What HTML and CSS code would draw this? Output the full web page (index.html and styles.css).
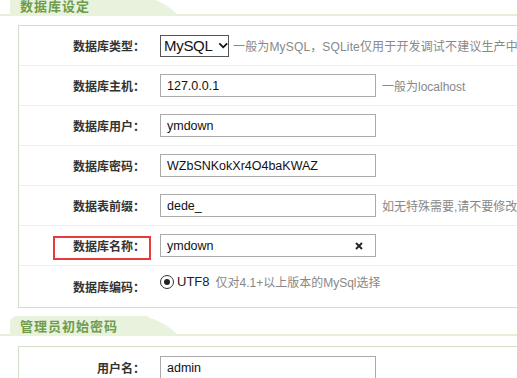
FILE: index.html
```html
<!DOCTYPE html>
<html>
<head>
	<meta charset="UTF-8">
	<title>数据库设定</title>
	<link rel="stylesheet" href="styles.css">
</head>
<body>

<div class="page">
	<div class="sec-head"><span class="tab">数据库设定</span></div>
	<div class="box">
		<div class="row">
			<span class="lab">数据库类型：</span>
			<div class="field">
				<span class="select">MySQL<svg width="12" height="9" viewBox="0 0 12 9"><path d="M1.5 2 L6 6.5 L10.5 2" fill="none" stroke="#111" stroke-width="2"/></svg></span>
				<span class="tip tip-near">一般为MySQL，SQLite仅用于开发调试不建议生产中</span>
			</div>
		</div>
		<div class="row">
			<span class="lab">数据库主机：</span>
			<div class="field">
				<input class="txt" type="text" value="127.0.0.1" />
				<span class="tip">一般为localhost</span>
			</div>
		</div>
		<div class="row">
			<span class="lab">数据库用户：</span>
			<div class="field">
				<input class="txt" type="text" value="ymdown" />
			</div>
		</div>
		<div class="row">
			<span class="lab">数据库密码：</span>
			<div class="field">
				<input class="txt" type="text" value="WZbSNKokXr4O4baKWAZ" />
			</div>
		</div>
		<div class="row">
			<span class="lab">数据表前缀：</span>
			<div class="field">
				<input class="txt" type="text" value="dede_" />
				<span class="tip">如无特殊需要,请不要修改</span>
			</div>
		</div>
		<div class="row">
			<span class="mark"></span>
			<span class="lab">数据库名称：</span>
			<div class="field">
				<span class="txt-wrap">
					<input class="txt" type="text" value="ymdown" />
					<svg class="clear" width="8" height="8" viewBox="0 0 8 8"><path d="M1 1 L7 7 M7 1 L1 7" stroke="#222" stroke-width="1.8"/></svg>
				</span>
			</div>
		</div>
		<div class="row">
			<span class="lab">数据库编码：</span>
			<div class="field field-up">
				<span class="radio"></span>
				<span class="radio-text">UTF8</span>
				<span class="tip">仅对4.1+以上版本的MySql选择</span>
			</div>
		</div>
	</div>

	<div class="sec-head sec-next"><span class="tab">管理员初始密码</span></div>
	<div class="box box-next">
		<div class="row">
			<span class="lab">用户名：</span>
			<div class="field">
				<input class="txt" type="text" value="admin" />
			</div>
		</div>
	</div>
</div>

</body>
</html>
```

FILE: styles.css
```css
*{ margin: 0; padding: 0; box-sizing: border-box;}
body{ overflow: hidden; font-family: "Liberation Sans", "Noto Sans CJK SC", sans-serif; font-size: 12px; color: #333; background: #fff;}
input{ font-family: "Liberation Sans", Arial, sans-serif; outline: none;}

.page{ width: 640px; margin-top: -4px;}

/* 分组标题 */
.sec-head{ height: 20px; padding-left: 10px; border-bottom: 2px solid #e5efd8;}
.sec-next{ margin-top: 8px;}
.tab{ display: inline-block; position: relative; height: 20px; width: 138px; padding-left: 10px; line-height: 22px; font-size: 13px; font-weight: bold; letter-spacing: 1px; color: #6e9c4a; background: #e8f2dd; border-radius: 7px 0 0 0;}
.tab::after{ content: ''; position: absolute; top: 0; right: -22px; width: 34px; height: 20px; background: #e8f2dd; border-radius: 0 24px 0 0 / 0 20px 0 0; transform: skewX(40deg);}

/* 表单框 */
.box{ margin: 9px 0 0 18px; border: 1px solid #d3dec7; border-right: none;}
.box-next{ margin-top: 10px;}
.row{ display: flex; align-items: center; height: 40px; border-bottom: 1px solid #efefef; position: relative;}
.row:last-child{ border-bottom: none; height: 41px;}
.lab{ width: 141px; padding-right: 15px; text-align: right; font-weight: bold; font-size: 12px; color: #333; flex-shrink: 0;}
.field{ display: flex; align-items: center; white-space: nowrap;}
.field-up{ padding-bottom: 10px;}

.txt{ width: 216px; height: 23px; border: 1px solid #aaa; padding: 0 6px; font-size: 12.5px; color: #111; background: #fff;}
.txt-wrap{ position: relative; display: inline-block; height: 23px;}
.clear{ position: absolute; left: 195px; top: 8px;}

.select{ display: flex; align-items: center; height: 22px; width: 69px; border: 1px solid #555; padding-left: 3px; font-size: 15px; color: #111; letter-spacing: -0.3px;}
.select svg{ margin-left: 5px;}

.tip{ margin-left: 6px; font-size: 12px; color: #888;}
.tip-near{ margin-left: 4px; letter-spacing: 0.15px;}

.radio{ width: 14px; height: 14px; border: 1px solid #333; border-radius: 50%; position: relative; background: #fff;}
.radio::after{ content: ''; position: absolute; left: 3px; top: 3px; width: 6px; height: 6px; border-radius: 50%; background: #222;}
.radio-text{ margin-left: 3px; font-size: 13px; color: #222;}

/* 红色标注框 */
.mark{ position: absolute; left: 34px; top: 10px; width: 98px; height: 24px; border: 2px solid #e83a3a;}
```
